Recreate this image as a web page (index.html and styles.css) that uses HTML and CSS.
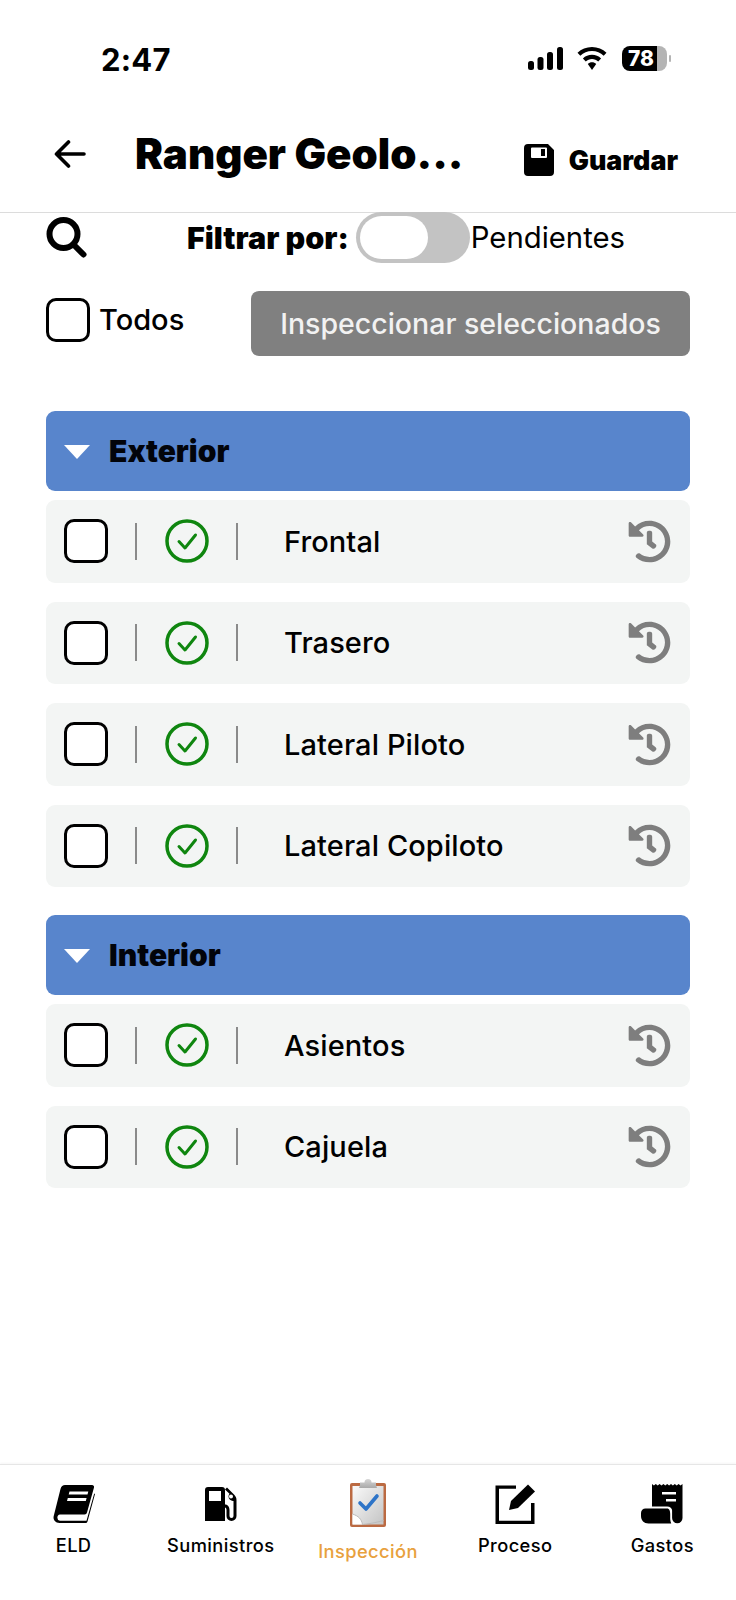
FILE: index.html
```html
<!DOCTYPE html>
<html lang="es">
<head>
<meta charset="utf-8">
<title>Inspección</title>
<link rel="stylesheet" href="styles.css">
</head>
<body>
<div class="app">
  <div class="status">
    <span class="time">2:47</span>
    <div class="status-icons">
      <svg class="signal" viewBox="0 0 35 23"><rect x="0" y="14" width="6" height="9" rx="2.5"/><rect x="9.5" y="10" width="6" height="13" rx="2.5"/><rect x="19" y="5" width="6" height="18" rx="2.5"/><rect x="29" y="0" width="6" height="23" rx="2.5"/></svg>
      <svg class="wifi" viewBox="0 0 30 23"><path d="M15 0C9.400 0 4.300 2.200.500 5.800l2.800 3C6.400 5.900 10.500 4.100 15 4.100s8.600 1.800 11.700 4.700l2.800-3C25.700 2.200 20.600 0 15 0z"/><path d="M15 7.800c-3.500 0-6.700 1.400-9.100 3.600l2.900 3c1.600-1.500 3.800-2.400 6.200-2.400s4.600.9 6.200 2.400l2.900-3c-2.400-2.200-5.600-3.600-9.100-3.600z"/><path d="M15 15.300c-1.600 0-3.100.6-4.200 1.700L15 23l4.200-6c-1.100-1.100-2.600-1.700-4.200-1.700z"/></svg>
      <div class="battery"><span class="battery-level">78</span></div>
      <span class="battery-nub"></span>
    </div>
  </div>

  <header class="topbar">
    <svg class="back" viewBox="0 0 32 28"><path d="M30 14H3M14.500 2 2.500 14l12 12" fill="none" stroke="#000" stroke-width="3.600" stroke-linecap="round" stroke-linejoin="round"/></svg>
    <h1 class="title">Ranger Geolo...</h1>
    <div class="save">
      <svg class="save-icon" viewBox="0 0 30 32"><path fill-rule="evenodd" d="M4 0h20l6 6v22a4 4 0 0 1-4 4H4a4 4 0 0 1-4-4V4a4 4 0 0 1 4-4zM8 3.500a1 1 0 0 0-1 1v8.500a1 1 0 0 0 1 1h14a1 1 0 0 0 1-1V4.500a1 1 0 0 0-1-1zM17 5h4v7h-4z"/></svg>
      <span class="save-label">Guardar</span>
    </div>
  </header>

  <div class="filter">
    <svg class="search" viewBox="0 0 41 41"><circle cx="17.500" cy="17" r="14" fill="none" stroke="#000" stroke-width="6"/><path d="M28 28l9.500 9.500" fill="none" stroke="#000" stroke-width="6" stroke-linecap="round"/></svg>
    <span class="filter-label">Filtrar por:</span>
    <div class="toggle"><span class="toggle-thumb"></span></div>
    <span class="filter-value">Pendientes</span>
  </div>

  <div class="actions">
    <div class="todos">
      <span class="checkbox"></span>
      <span class="todos-label">Todos</span>
    </div>
    <button class="inspect">Inspeccionar seleccionados</button>
  </div>

  <main class="sections">
    <section class="section">
      <div class="section-head"><span class="caret"></span><span class="section-title">Exterior</span></div>
      <div class="rows">
        <div class="row"><span class="checkbox"></span><span class="sep sep-a"></span><svg class="ok" viewBox="0 0 44 44"><circle cx="22" cy="22" r="20" fill="none" stroke="#0f860f" stroke-width="3.500"/><path d="M14 22.500l6 6.500 10.500-13" fill="none" stroke="#0f860f" stroke-width="3" stroke-linecap="round" stroke-linejoin="round"/></svg><span class="sep sep-b"></span><span class="row-name">Frontal</span><svg class="history" viewBox="0 0 512 512"><use href="#hist"/></svg></div>
        <div class="row"><span class="checkbox"></span><span class="sep sep-a"></span><svg class="ok" viewBox="0 0 44 44"><circle cx="22" cy="22" r="20" fill="none" stroke="#0f860f" stroke-width="3.500"/><path d="M14 22.500l6 6.500 10.500-13" fill="none" stroke="#0f860f" stroke-width="3" stroke-linecap="round" stroke-linejoin="round"/></svg><span class="sep sep-b"></span><span class="row-name">Trasero</span><svg class="history" viewBox="0 0 512 512"><use href="#hist"/></svg></div>
        <div class="row"><span class="checkbox"></span><span class="sep sep-a"></span><svg class="ok" viewBox="0 0 44 44"><circle cx="22" cy="22" r="20" fill="none" stroke="#0f860f" stroke-width="3.500"/><path d="M14 22.500l6 6.500 10.500-13" fill="none" stroke="#0f860f" stroke-width="3" stroke-linecap="round" stroke-linejoin="round"/></svg><span class="sep sep-b"></span><span class="row-name">Lateral Piloto</span><svg class="history" viewBox="0 0 512 512"><use href="#hist"/></svg></div>
        <div class="row"><span class="checkbox"></span><span class="sep sep-a"></span><svg class="ok" viewBox="0 0 44 44"><circle cx="22" cy="22" r="20" fill="none" stroke="#0f860f" stroke-width="3.500"/><path d="M14 22.500l6 6.500 10.500-13" fill="none" stroke="#0f860f" stroke-width="3" stroke-linecap="round" stroke-linejoin="round"/></svg><span class="sep sep-b"></span><span class="row-name">Lateral Copiloto</span><svg class="history" viewBox="0 0 512 512"><use href="#hist"/></svg></div>
      </div>
    </section>
    <section class="section">
      <div class="section-head"><span class="caret"></span><span class="section-title">Interior</span></div>
      <div class="rows">
        <div class="row"><span class="checkbox"></span><span class="sep sep-a"></span><svg class="ok" viewBox="0 0 44 44"><circle cx="22" cy="22" r="20" fill="none" stroke="#0f860f" stroke-width="3.500"/><path d="M14 22.500l6 6.500 10.500-13" fill="none" stroke="#0f860f" stroke-width="3" stroke-linecap="round" stroke-linejoin="round"/></svg><span class="sep sep-b"></span><span class="row-name">Asientos</span><svg class="history" viewBox="0 0 512 512"><use href="#hist"/></svg></div>
        <div class="row"><span class="checkbox"></span><span class="sep sep-a"></span><svg class="ok" viewBox="0 0 44 44"><circle cx="22" cy="22" r="20" fill="none" stroke="#0f860f" stroke-width="3.500"/><path d="M14 22.500l6 6.500 10.500-13" fill="none" stroke="#0f860f" stroke-width="3" stroke-linecap="round" stroke-linejoin="round"/></svg><span class="sep sep-b"></span><span class="row-name">Cajuela</span><svg class="history" viewBox="0 0 512 512"><use href="#hist"/></svg></div>
      </div>
    </section>
  </main>

  <nav class="tabs">
    <div class="tab">
      <svg class="tab-icon" viewBox="0 0 42 38"><path fill-rule="evenodd" d="M12 0h27a2 2 0 0 1 2 2.500L34 27.500a2.500 2.500 0 0 1-2.500 2H7a3.200 3.200 0 0 0 0 6.300h26.500L41.200 8.500 42 9 34.500 36.500a2 2 0 0 1-2 1.500H6.500C2.500 38 0 35 .6 31.500L7.500 4C8 1.500 10 0 12 0zM16.500 6.500l-.8 3h18.800l.8-3zM14.800 13l-.8 3h18.800l.8-3z"/></svg>
      <span class="tab-label">ELD</span>
    </div>
    <div class="tab">
      <svg class="tab-icon pump" viewBox="0 0 32 34"><path fill-rule="evenodd" d="M3 0h14a3 3 0 0 1 3 3v31H0V3a3 3 0 0 1 3-3zM4 4v10h12V4z"/><path fill-rule="evenodd" d="M22 .500l7 7c1.500 1.500 2.500 3 2.500 5.500v16a5 5 0 0 1-10 0v-6c0-1.500-.7-2.500-1.500-2.500v-3c3 0 4.500 2.500 4.500 5.500v6a2 2 0 0 0 4 0V14a4.500 4.500 0 0 1-5-4.500c0-1 .3-2 1-2.700L20 2.500zM26 7.500a2 2 0 1 0 0 4 2 2 0 0 0 0-4z"/></svg>
      <span class="tab-label">Suministros</span>
    </div>
    <div class="tab tab-active">
      <svg class="tab-icon clip" viewBox="0 0 38 50">
        <defs>
          <linearGradient id="paper" x1="0" y1="0" x2="1" y2="1"><stop offset="0" stop-color="#fafafa"/><stop offset="1" stop-color="#c4c4c4"/></linearGradient>
          <linearGradient id="metal" x1="0" y1="0" x2="0" y2="1"><stop offset="0" stop-color="#d6d6d6"/><stop offset="1" stop-color="#a9a9a9"/></linearGradient>
        </defs>
        <rect x="1" y="5" width="36" height="44" rx="2" fill="#bb6a42"/>
        <rect x="3.500" y="8" width="31" height="38.500" fill="url(#paper)"/>
        <path d="M3.500 36c6 2 9 5 10 10.500H3.500z" fill="#fff"/>
        <path d="M3.500 36c6 2 9 5 10 10.500c5-.5 12-1.500 21-4" fill="none" stroke="#bbb" stroke-width="1"/>
        <path d="M11 7V4.500h4.500a3.500 3.500 0 0 1 7 0H27V7l1 3H10z" fill="url(#metal)"/>
        <path d="M11 25l6 6L28 18" fill="none" stroke="#2d74c8" stroke-width="3.600" stroke-linecap="round" stroke-linejoin="round"/>
      </svg>
      <span class="tab-label">Inspección</span>
    </div>
    <div class="tab">
      <svg class="tab-icon" viewBox="0 0 40 40"><path d="M21 1.500v3.300H4V36.700h32V19h3.500v21H.5V1.500z"/><path d="M33 .5l7 7L23 24l-9 2 2-9z"/></svg>
      <span class="tab-label">Proceso</span>
    </div>
    <div class="tab">
      <svg class="tab-icon" viewBox="0 0 42 40"><path fill-rule="evenodd" d="M11 0l1.900 1.500L14.800 0l1.900 1.500L18.600 0l1.900 1.500L22.400 0l1.900 1.500L26.200 0l1.900 1.500L30 0l1.900 1.500L33.800 0l1.900 1.500L37.600 0l1.900 1.500L41.500 0v34a5.200 5.200 0 0 1-10.400 0v-7.500c0-2-2-4-5-4H11zM21 8v2.500h14V8zM25 15v2.500h10V15z"/><path d="M4.500 24.500H26c2.500 0 3.200 2.500 3.200 5.500v5c0 1.500.5 3 1 4.500H7.500C3 39.500 0 36.500 0 32v-3c0-2.500 2-4.500 4.500-4.500z"/></svg>
      <span class="tab-label">Gastos</span>
    </div>
  </nav>
</div>

<svg class="defs" width="0" height="0"><defs><path id="hist" d="M504 255.531c.253 136.64-111.18 248.372-247.82 248.468-59.015.042-113.223-20.53-155.822-54.911-11.077-8.94-11.905-25.541-1.839-35.607l11.267-11.267c8.609-8.609 22.353-9.551 31.891-1.984C173.062 425.135 212.781 440 256 440c101.705 0 184-82.311 184-184 0-101.705-82.311-184-184-184-48.814 0-93.149 18.969-126.068 49.932l50.754 50.754c10.08 10.08 2.941 27.314-11.313 27.314H24c-8.837 0-16-7.163-16-16V38.627c0-14.254 17.234-21.393 27.314-11.314l49.372 49.372C129.209 31.084 189.552 8 256 8c136.81 0 247.747 110.78 248 247.531zm-180.912 78.784l9.823-12.63c8.138-10.463 6.253-25.542-4.21-33.679L288 256.349V152c0-13.255-10.745-24-24-24h-16c-13.255 0-24 10.745-24 24v135.651l65.409 50.874c10.463 8.137 25.541 6.253 33.679-4.21z"/></defs></svg>
</body>
</html>
```

FILE: styles.css
```css
* { box-sizing: border-box; }
html, body { margin: 0; padding: 0; background: #fff; }
body { font-family: Inter, "Liberation Sans", sans-serif; color: #000; }
.app { width: 736px; height: 1600px; display: flex; flex-direction: column; overflow: hidden; }
.defs { position: absolute; }

.status { height: 96px; padding: 41px 69px 0 101px; display: flex; justify-content: space-between; align-items: flex-start; }
.time { font-size: 31px; font-weight: 700; line-height: 38px; letter-spacing: .2px; }
.status-icons { display: flex; align-items: center; gap: 14px; padding-top: 5px; position: relative; }
.signal { width: 35px; height: 23px; }
.wifi { width: 30px; height: 23px; margin-right: 1px; }
.battery { width: 45px; height: 25px; border-radius: 8px; background: linear-gradient(90deg, #000 0, #000 35px, #b4b4b4 35px); display: flex; align-items: center; padding-left: 6px; }
.battery-level { color: #fff; font-size: 21px; font-weight: 800; line-height: 25px; }
.battery-nub { position: absolute; right: -4px; top: 14px; width: 2px; height: 7px; background: #b4b4b4; border-radius: 1px; }

.topbar { height: 117px; padding: 0 58px 1px 54px; display: flex; align-items: center; border-bottom: 1px solid #dcdcdc; }
.back { width: 32px; height: 28px; flex: none; }
.title { margin: 0 0 0 49px; font-size: 42px; font-weight: 900; line-height: 50px; white-space: nowrap; }
.save { margin-left: auto; display: flex; align-items: center; gap: 15px; padding-top: 13px; }
.save-icon { width: 30px; height: 32px; margin-bottom: 1px; }
.save-label { font-size: 26.800px; font-weight: 900; line-height: 30px; }

.filter { height: 51px; margin-top: -1px; padding-left: 46px; display: flex; align-items: center; }
.search { width: 41px; height: 41px; flex: none; }
.filter-label { margin-left: 100px; font-size: 30.500px; font-weight: 900; white-space: nowrap; }
.toggle { width: 114px; height: 51px; margin-left: 7px; background: #c3c3c3; border-radius: 26px; padding: 4px 0 0 4px; flex: none; }
.toggle-thumb { display: block; width: 68px; height: 43px; background: #fff; border-radius: 22px; }
.filter-value { font-size: 29.300px; font-weight: 400; margin-left: 1px; }

.actions { margin-top: 28px; padding: 0 46px; display: flex; justify-content: space-between; align-items: center; }
.todos { display: flex; align-items: center; gap: 9px; margin-top: -8px; }
.todos-label { font-size: 29px; font-weight: 500; line-height: 36px; margin-top: 0; }
.checkbox { width: 44px; height: 44px; background: #fff; border: 3.500px solid #000; border-radius: 10px; flex: none; display: block; }
.inspect { width: 439px; height: 65px; background: #808080; color: #f2f2f2; border: 0; border-radius: 8px; font: 500 28.500px Inter, sans-serif; padding: 0; }

.sections { margin-top: 55px; padding: 0 46px; display: flex; flex-direction: column; gap: 28px; }
.section-head { height: 80px; background: #5885cc; border-radius: 9px; display: flex; align-items: center; padding-left: 18px; }
.caret { width: 0; height: 0; border-left: 13px solid transparent; border-right: 13px solid transparent; border-top: 14px solid #fff; margin-top: 2px; }
.section-title { margin-left: 19px; font-size: 30px; font-weight: 900; line-height: 36px; color: #02040a; }
.rows { margin-top: 9px; display: flex; flex-direction: column; gap: 19px; }
.row { height: 82.500px; background: #f3f5f4; border-radius: 9px; display: flex; align-items: center; padding: 0 19px 0 18px; }
.sep { width: 2px; height: 37px; background: #8a8a8a; flex: none; }
.sep-a { margin-left: 27px; margin-right: 28px; }
.sep-b { margin-left: 27px; }
.ok { width: 44px; height: 44px; flex: none; }
.row-name { margin-left: 46px; font-size: 29px; font-weight: 500; line-height: 36px; letter-spacing: .1px; padding-top: 1px; }
.history { width: 43px; height: 43px; margin-left: auto; fill: #7e7e7e; flex: none; }

.tabs { margin-top: auto; height: 136px; border-top: 1px solid #e6e6e6; box-shadow: 0 -1px 2px rgba(0,0,0,.04); display: grid; grid-template-columns: repeat(5, 1fr); }
.tab { display: flex; flex-direction: column; align-items: center; padding-top: 19px; }
.tab-icon { width: 42px; height: 40px; display: block; }
.pump { width: 32px; height: 34px; margin: 3px 0; }
.clip { width: 38px; height: 50px; margin-top: -6px; }
.tab-label { margin-top: 10px; font-size: 18.300px; font-weight: 500; line-height: 22px; letter-spacing: .4px; }
.tab-active .tab-label { color: #e8a13d; margin-top: 12px; font-weight: 500; }
```
